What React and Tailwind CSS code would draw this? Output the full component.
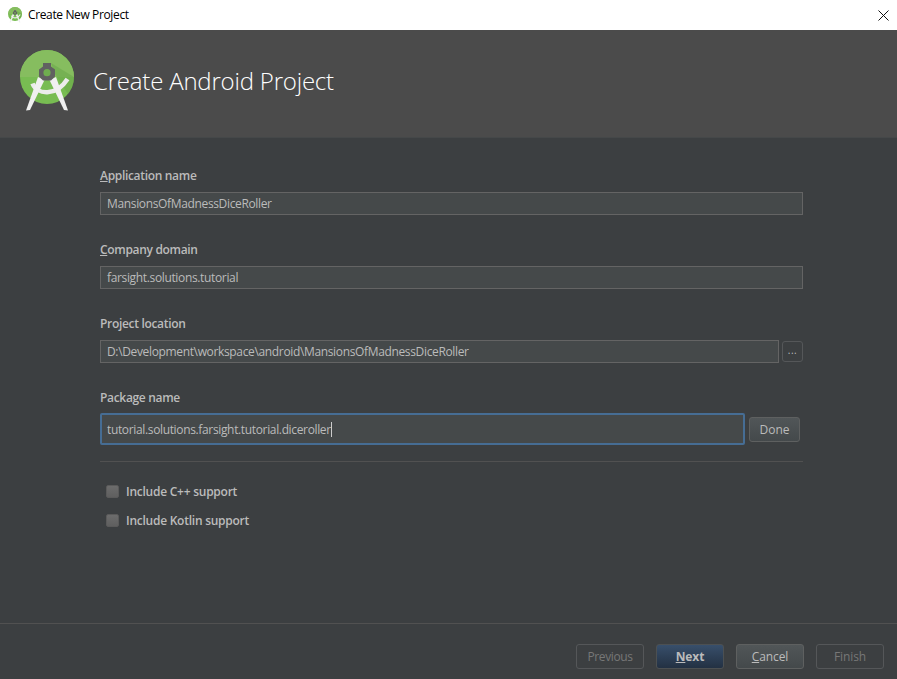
const font = { fontFamily: '"Open Sans", "Noto Sans", sans-serif' };

function Logo({ className }) {
  return (
    <svg viewBox="0 0 54 62" className={className}>
      <circle cx="27" cy="27" r="27" fill="#78bc52" />
      <path d="M0 27a27 27 0 0 1 54 0z" fill="#86bd5f" />
      <path d="M31 13 L54 27 A27 27 0 0 1 48 44 L35 24 Z" fill="#6aa748" opacity="0.55" />
      <path d="M12.5 33.5 C 17 45, 36 47, 47.5 29" stroke="#ececec" strokeWidth="4.5" fill="none" />
      <path d="M18 27 L24.5 30 L10 60 L6 60.5 Z" fill="#f0f0f0" />
      <path d="M36 27 L29.5 30 L44 60 L48 60.5 Z" fill="#f0f0f0" />
      <path d="M23 13 h8 v3.5 l4 3 v7 l-4 4 h-8 l-4 -4 v-7 l4 -3 z" fill="#616161" />
      <circle cx="27" cy="22.7" r="3.6" fill="#6fae4f" />
    </svg>
  );
}

function Label({ u, rest }) {
  return (
    <div className="h-[17px] pt-[1px] text-[12px] leading-[17px] font-semibold text-[#bbbbbb] tracking-[-0.32px]">
      {u && <span className="underline">{u}</span>}
      {rest}
    </div>
  );
}

function Field({ value }) {
  return (
    <div className="flex-1 h-[23px] border border-[#646464] bg-[#45494a] px-[6px] text-[12px] leading-[21px] text-[#bbbbbb] tracking-[-0.35px]">
      {value}
    </div>
  );
}

function FooterButton({ children, variant }) {
  const styles = {
    off: "border-[#555759] text-[#777777]",
    primary: "border-[#4c5052] bg-gradient-to-b from-[#384f6b] to-[#233143] text-[#bbbbbb] font-bold",
    normal: "border-[#5e6060] bg-gradient-to-b from-[#515658] to-[#44494b] text-[#bbbbbb]",
  };
  return (
    <div className={`w-[68px] h-[25px] rounded-[3px] border flex items-center justify-center text-[12px] tracking-[-0.1px] ${styles[variant]}`}>
      {children}
    </div>
  );
}

function Check({ label }) {
  return (
    <div className="flex items-center h-[17px]">
      <div className="ml-[6px] w-[13px] h-[13px] rounded-[2px] border border-[#5a5a5a] bg-gradient-to-b from-[#6c6c6c] to-[#5f5f5f]" />
      <div className="ml-[7px] text-[12px] font-semibold text-[#bbbbbb] tracking-[-0.25px]">{label}</div>
    </div>
  );
}

export default function App() {
  return (
    <div style={font} className="w-[897px] h-[679px] flex flex-col bg-[#3c3f41] overflow-hidden">
      <div className="h-[30px] bg-white flex items-center">
        <Logo className="ml-[8px] w-[14px] h-[16px]" />
        <div className="ml-[6px] text-[12px] text-black tracking-[-0.37px]">Create New Project</div>
        <svg viewBox="0 0 11 11" className="ml-auto mr-[8px] w-[11px] h-[11px]" stroke="#111" strokeWidth="1" fill="none">
          <path d="M0.5 0.5 L10.5 10.5 M10.5 0.5 L0.5 10.5" />
        </svg>
      </div>

      <div className="h-[108px] bg-[#4b4b4b] flex items-start border-b border-[#454849]">
        <Logo className="ml-[20px] mt-[20px] w-[54px] h-[62px]" />
        <div className="ml-[19px] mt-[32px] text-[24px] leading-[38px] text-white font-light tracking-[-0.2px]">
          Create Android Project
        </div>
      </div>

      <div className="flex-1 ml-[100px] w-[703px] pt-[28px]">
        <Label u="A" rest="pplication name" />
        <div className="mt-[9px] flex"><Field value="MansionsOfMadnessDiceRoller" /></div>

        <div className="mt-[25px]"><Label u="C" rest="ompany domain" /></div>
        <div className="mt-[9px] flex"><Field value="farsight.solutions.tutorial" /></div>

        <div className="mt-[25px]"><Label rest="Project location" /></div>
        <div className="mt-[9px] flex items-center">
          <Field value="D:\Development\workspace\android\MansionsOfMadnessDiceRoller" />
          <div className="ml-[3px] w-[21px] h-[21px] rounded-[3px] border border-[#555759] flex items-center justify-center pb-[4px] text-[10px] leading-none tracking-[0.5px] text-[#bbbbbb]">...</div>
        </div>

        <div className="mt-[25px]"><Label rest="Package name" /></div>
        <div className="mt-[8px] flex items-center">
          <div className="w-[645px] h-[32px] rounded-[2px] border-[2px] border-[#466d94] bg-[#45494a] pl-[5px] pt-[1px] flex items-center text-[12px] text-[#bbbbbb] tracking-[-0.35px]">
            tutorial.solutions.farsight.tutorial.diceroller
            <span className="w-px h-[15px] bg-[#cccccc]" />
          </div>
          <div className="ml-[4px] w-[51px] h-[25px] pt-[1px] rounded-[3px] border border-[#5e6060] bg-gradient-to-b from-[#515658] to-[#44494b] flex items-center justify-center text-[12px] text-[#bbbbbb]">Done</div>
        </div>

        <div className="mt-[16px] h-px bg-[#515151]" />

        <div className="mt-[21px]"><Check label="Include C++ support" /></div>
        <div className="mt-[12px]"><Check label="Include Kotlin support" /></div>
      </div>

      <div className="h-[56px] border-t border-[#515151] flex justify-end gap-[12px] pr-[13px] pt-[20px]">
        <FooterButton variant="off"><span className="tracking-[-0.4px]">Previous</span></FooterButton>
        <FooterButton variant="primary"><span><span className="underline">N</span>ext</span></FooterButton>
        <FooterButton variant="normal"><span><span className="underline">C</span>ancel</span></FooterButton>
        <FooterButton variant="off">Finish</FooterButton>
      </div>
    </div>
  );
}
